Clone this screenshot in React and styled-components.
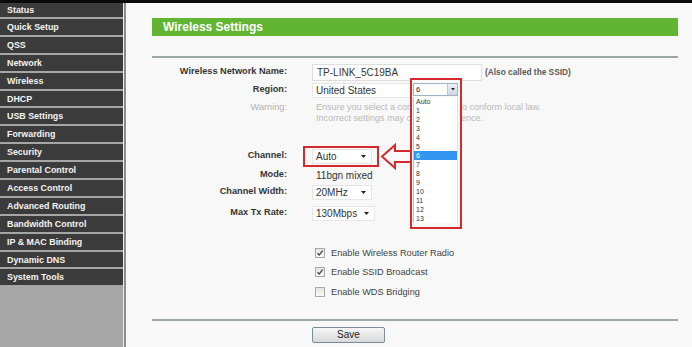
import React from "react";
import styled, { createGlobalStyle } from "styled-components";

const GlobalStyle = createGlobalStyle`
  html, body { margin: 0; padding: 0; }
  body {
    width: 692px;
    height: 347px;
    overflow: hidden;
    background: #f8f8f8;
    font-family: "Liberation Sans", Arial, sans-serif;
  }
`;

const Page = styled.div`
  position: relative;
  width: 692px;
  height: 347px;
  display: flex;
  flex-direction: column;
  overflow: hidden;
`;

const TopStrip = styled.div`
  height: 3px;
  flex: none;
  background: #0b0b0b;
`;

const Body = styled.div`
  flex: 1;
  display: flex;
  min-height: 0;
`;

const Sidebar = styled.nav`
  width: 123px;
  flex: none;
  display: flex;
  flex-direction: column;
  gap: 2px;
  background: #a6a6a6;
  border-right: 1px solid #ececec;
`;

const SideEdge = styled.div`
  width: 2px;
  flex: none;
  background: #8c8c8c;
`;

const MenuItem = styled.div`
  height: ${(p) => (p.$cut ? 14 : 15.9)}px;
  flex: none;
  display: flex;
  align-items: center;
  padding-left: 7px;
  background: #3b3b3b;
  color: #f4f4f4;
  font-size: 8.9px;
  font-weight: bold;
  white-space: nowrap;
`;

const Main = styled.main`
  flex: 1;
  padding: 15px 14px 0 26px;
  display: flex;
  flex-direction: column;
`;

const TitleBar = styled.div`
  height: 18px;
  display: flex;
  align-items: center;
  padding-left: 11px;
  background: #62b533;
  color: #fff;
  font-size: 12px;
  font-weight: bold;
`;

const Rule = styled.div`
  height: 2px;
  margin-top: ${(p) => p.$mt}px;
  background: #9ba7a6;
`;

const FieldRow = styled.div`
  display: grid;
  grid-template-columns: 135px auto;
  column-gap: 25px;
  align-items: ${(p) => (p.$top ? "start" : "center")};
  height: ${(p) => p.$h || 18}px;
  margin-top: ${(p) => p.$mt || 0}px;
  padding-top: ${(p) => p.$pt || 0}px;
  box-sizing: border-box;
`;

const Label = styled.div`
  text-align: right;
  font-size: 9.2px;
  font-weight: ${(p) => (p.$muted ? "normal" : "bold")};
  color: ${(p) => (p.$muted ? "#b2b2b2" : "#353535")};
  line-height: 11.5px;
  white-space: nowrap;
`;

const Value = styled.div`
  position: relative;
  display: flex;
  align-items: center;
  font-size: 10px;
  color: #333;
`;

const TextInput = styled.div`
  width: 170px;
  height: 17px;
  box-sizing: border-box;
  display: flex;
  align-items: center;
  padding-left: 4px;
  background: #fff;
  border: 1px solid #dedede;
  font-size: 10px;
  color: #333;
`;

const Hint = styled.span`
  margin-left: 3px;
  font-size: 8.3px;
  font-weight: bold;
  color: #5a5a5a;
`;

const Select = styled.div`
  width: ${(p) => p.$w}px;
  height: 15px;
  box-sizing: border-box;
  display: flex;
  align-items: center;
  justify-content: space-between;
  padding: 0 5px 0 3px;
  background: #fff;
  border: 1px solid #e6e6e6;
  font-size: 10px;
  color: #333;
`;

const Plain = styled.span`
  padding-left: 4px;
`;

const WarningText = styled.div`
  font-size: 9px;
  line-height: 11.5px;
  color: #b8b8b8;
  padding-left: 4px;
  white-space: nowrap;
`;

const Checks = styled.div`
  margin-top: 21px;
  padding-left: 163px;
  display: flex;
  flex-direction: column;
`;

const CheckRow = styled.div`
  height: 19.5px;
  display: flex;
  align-items: center;
  gap: 6px;
  font-size: 9.2px;
  color: #444;
`;

const Box = styled.span`
  width: 10px;
  height: 10px;
  box-sizing: border-box;
  display: flex;
  align-items: center;
  justify-content: center;
  border: 1px solid #a9a9a9;
  background: linear-gradient(#e4e4e4, #fafafa);
`;

const ButtonRow = styled.div`
  margin-top: 6px;
  padding-left: 160px;
`;

const SaveButton = styled.div`
  width: 73px;
  height: 16px;
  box-sizing: border-box;
  display: flex;
  align-items: center;
  justify-content: center;
  border: 1px solid #7c8b99;
  border-radius: 2px;
  background: linear-gradient(#f6f6f6, #d9d9d9);
  font-size: 10px;
  color: #222;
`;

/* annotations laid over the form */
const Mark = styled.div`
  position: absolute;
  left: -9px;
  top: -3px;
  width: 76px;
  height: 21px;
  box-sizing: border-box;
  border: 2px solid #d42a2e;
`;

const ArrowSvg = styled.svg`
  position: absolute;
  left: 67px;
  top: -6px;
`;

const Dropdown = styled.div`
  position: absolute;
  left: 410px;
  top: 78px;
  width: 52px;
  height: 151px;
  box-sizing: border-box;
  border: 2px solid #d42a2e;
  padding: 3px 2px 0 1px;
  background: #f9f9f9;
`;

const DropSelect = styled.div`
  width: 45px;
  height: 13px;
  box-sizing: border-box;
  display: flex;
  align-items: center;
  justify-content: space-between;
  padding-left: 2px;
  background: #fff;
  border: 1px solid #9fb3c8;
  font-size: 7.5px;
  color: #222;
`;

const DropButton = styled.span`
  width: 9px;
  height: 11px;
  display: flex;
  align-items: center;
  justify-content: center;
  background: linear-gradient(#eef3f8, #c9d6e3);
  border-left: 1px solid #b9c7d6;
`;

const List = styled.div`
  width: 45px;
  box-sizing: border-box;
  margin-top: 1px;
  background: #fff;
  border-left: 1px solid #c4c4c4;
  border-right: 1px solid #e0e0e0;
`;

const Option = styled.div`
  height: 9px;
  line-height: 9px;
  padding-left: 2px;
  font-size: 7px;
  background: ${(p) => (p.$on ? "#3296f0" : "transparent")};
  color: ${(p) => (p.$on ? "#fff" : "#333")};
`;

const Caret = ({ size = 5 }) => (
  <svg width={size} height={size * 0.6} viewBox="0 0 5 3">
    <path d="M0 0h5L2.5 3z" fill="#222" />
  </svg>
);

const Check = () => (
  <svg width="8" height="8" viewBox="0 0 8 8">
    <path d="M1.5 4.2l1.7 1.9L6.6 1.6" stroke="#444" strokeWidth="1.3" fill="none" />
  </svg>
);

const menu = [
  "Status", "Quick Setup", "QSS", "Network", "Wireless", "DHCP",
  "USB Settings", "Forwarding", "Security", "Parental Control",
  "Access Control", "Advanced Routing", "Bandwidth Control",
  "IP & MAC Binding", "Dynamic DNS", "System Tools",
];

const channels = ["Auto", "1", "2", "3", "4", "5", "6", "7", "8", "9", "10", "11", "12", "13"];

const checks = [
  { label: "Enable Wireless Router Radio", on: true },
  { label: "Enable SSID Broadcast", on: true },
  { label: "Enable WDS Bridging", on: false },
];

export default function App() {
  return (
    <Page>
      <GlobalStyle />
      <TopStrip />
      <Body>
        <Sidebar>
          {menu.map((item, i) => (
            <MenuItem key={item} $cut={i === 0}>{item}</MenuItem>
          ))}
        </Sidebar>
        <SideEdge />
        <Main>
          <TitleBar>Wireless Settings</TitleBar>
          <Rule $mt={20} />

          <FieldRow $mt={5}>
            <Label>Wireless Network Name:</Label>
            <Value>
              <TextInput>TP-LINK_5C19BA</TextInput>
              <Hint>(Also called the SSID)</Hint>
            </Value>
          </FieldRow>
          <FieldRow>
            <Label>Region:</Label>
            <Value>
              <Select $w={140}>United States <Caret /></Select>
            </Value>
          </FieldRow>
          <FieldRow $h={27} $pt={2.5} $top>
            <Label $muted>Warning:</Label>
            <WarningText>
              Ensure you select a correct country to conform local law.
              <br />
              Incorrect settings may cause interference.
            </WarningText>
          </FieldRow>

          <FieldRow $mt={21}>
            <Label>Channel:</Label>
            <Value>
              <Select $w={60}>Auto <Caret /></Select>
              <Mark />
              <ArrowSvg width="34" height="27" viewBox="0 0 34 27">
                <path
                  d="M3 13.5L16 2v6h17v11H16v6z"
                  fill="#fafafa"
                  stroke="#d42a2e"
                  strokeWidth="2"
                  strokeLinejoin="miter"
                />
              </ArrowSvg>
            </Value>
          </FieldRow>
          <FieldRow $mt={1}>
            <Label>Mode:</Label>
            <Value><Plain>11bgn mixed</Plain></Value>
          </FieldRow>
          <FieldRow $mt={-1}>
            <Label>Channel Width:</Label>
            <Value>
              <Select $w={60}>20MHz <Caret /></Select>
            </Value>
          </FieldRow>
          <FieldRow $mt={3}>
            <Label>Max Tx Rate:</Label>
            <Value>
              <Select $w={63}>130Mbps <Caret /></Select>
            </Value>
          </FieldRow>

          <Checks>
            {checks.map((c) => (
              <CheckRow key={c.label}>
                <Box>{c.on && <Check />}</Box>
                {c.label}
              </CheckRow>
            ))}
          </Checks>

          <Rule $mt={17} />
          <ButtonRow>
            <SaveButton>Save</SaveButton>
          </ButtonRow>
        </Main>
      </Body>

      <Dropdown>
        <DropSelect>
          6
          <DropButton><Caret size={4} /></DropButton>
        </DropSelect>
        <List>
          {channels.map((ch) => (
            <Option key={ch} $on={ch === "6"}>{ch}</Option>
          ))}
        </List>
      </Dropdown>
    </Page>
  );
}
